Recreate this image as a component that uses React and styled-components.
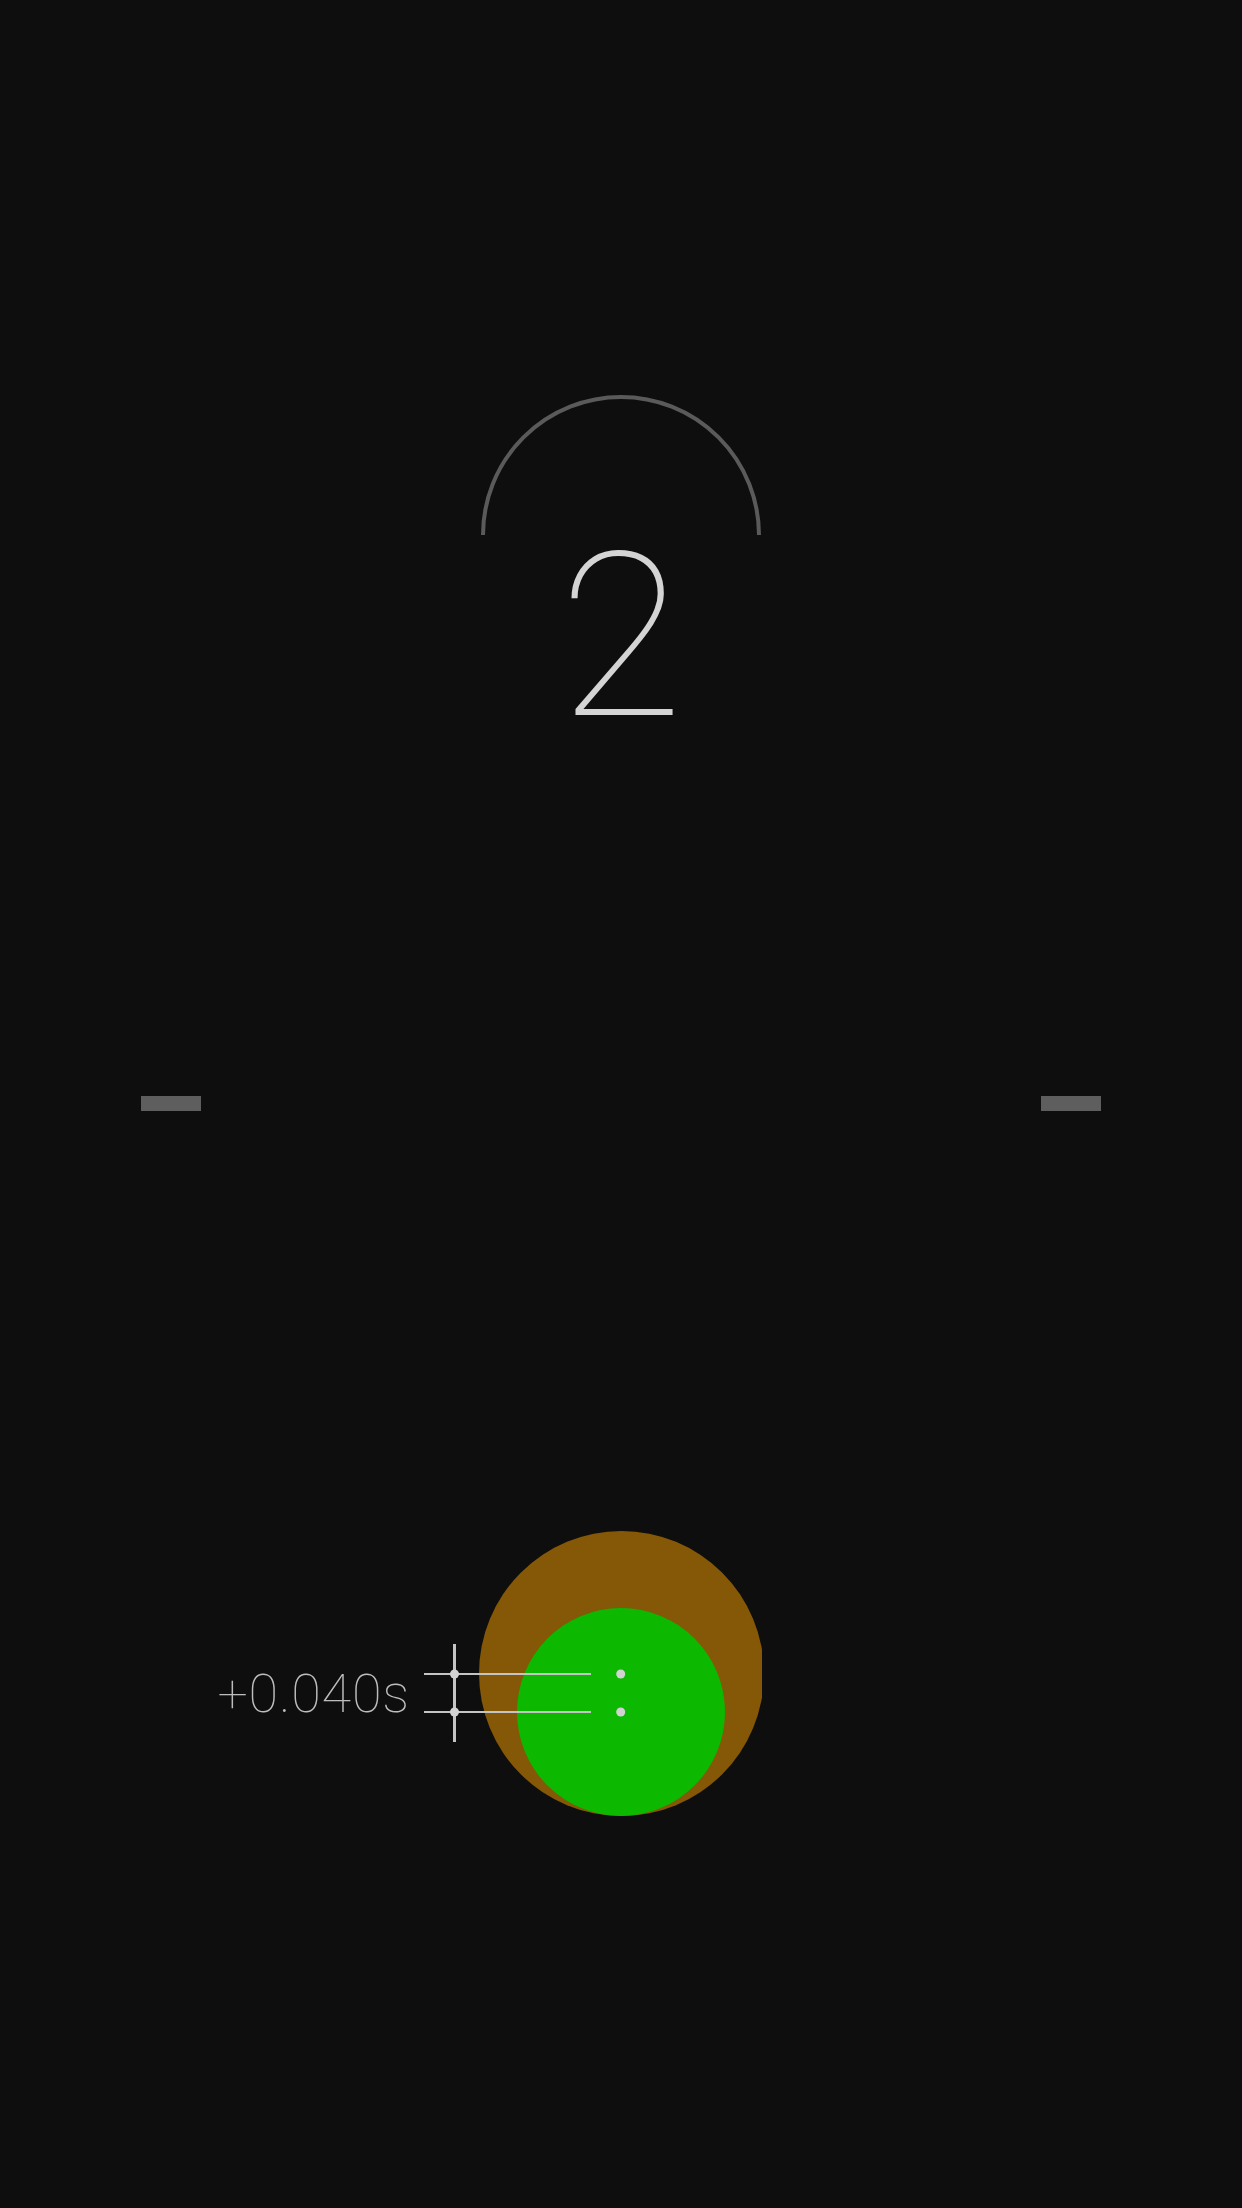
import React from 'react'
import styled, { createGlobalStyle } from 'styled-components'

const GlobalStyle = createGlobalStyle`
  html, body {
    margin: 0;
    padding: 0;
    background: #0e0e0e;
  }
`

const Page = styled.div`
  width: 1242px;
  height: 2208px;
  background: #0e0e0e;
  display: flex;
  flex-direction: column;
  align-items: center;
  padding-top: 393px;
  box-sizing: border-box;
  overflow: hidden;
  font-family: Roboto, "Liberation Sans", sans-serif;
`

const Arc = styled.svg`
  display: block;
  width: 284px;
  height: 142px;
`

const Digit = styled.div`
  font-size: 228px;
  line-height: 228px;
  font-weight: 100;
  color: #d4d4d4;
  margin-top: -12px;
`

const DashRow = styled.div`
  align-self: stretch;
  display: flex;
  justify-content: space-between;
  padding: 0 141px;
  margin-top: 345px;
`

const Dash = styled.div`
  width: 60px;
  height: 15px;
  background: #5e5e5e;
`

const Stage = styled.div`
  position: relative;
  align-self: stretch;
  height: 290px;
  margin-top: 420px;
  display: flex;
  justify-content: center;
`

const Target = styled.div`
  display: grid;
  place-items: end center;
  width: 285px;
  height: 285px;
`

const Disc = styled.div`
  grid-area: 1 / 1;
  position: relative;
  width: ${p => p.$size}px;
  height: ${p => p.$size}px;
  border-radius: 50%;
  background: ${p => p.$color};
  clip-path: ${p => (p.$clip ? 'inset(0 1.5px 0 0)' : 'none')};
`

const Readout = styled.div`
  position: absolute;
  top: 113px;
  right: 612px;
  display: flex;
  align-items: flex-start;
  gap: 10px;
`

const Offset = styled.div`
  font-size: 54px;
  line-height: 54px;
  font-weight: 100;
  letter-spacing: 0.8px;
  color: #bdbdbd;
  margin-top: 23px;
`

const Ruler = styled.svg`
  display: block;
  width: 210px;
  height: 100px;
`

const App = () => (
  <>
    <GlobalStyle />
    <Page>
      <Arc viewBox="0 0 284 142">
        <path d="M 4 142 A 138 138 0 0 1 280 142" fill="none" stroke="#5a5a5a" strokeWidth="4" />
      </Arc>
      <Digit>2</Digit>
      <DashRow>
        <Dash />
        <Dash />
      </DashRow>
      <Stage>
        <Target>
          <Disc $size={285} $color="#845806" $clip />
          <Disc $size={208} $color="#0cb800" />
        </Target>
        <Readout>
          <Offset>+0.040s</Offset>
          <Ruler viewBox="0 0 210 100">
            <g stroke="#c4c4c4" strokeWidth="2">
              <line x1="4" y1="30" x2="171" y2="30" />
              <line x1="4" y1="68" x2="171" y2="68" />
              <line x1="34.5" y1="0" x2="34.5" y2="98" strokeWidth="3" />
            </g>
            <g fill="#d2d2d2">
              <circle cx="34.5" cy="30" r="4.5" />
              <circle cx="34.5" cy="68" r="4.5" />
              <circle cx="200.7" cy="30" r="4.5" />
              <circle cx="200.7" cy="68" r="4.5" />
            </g>
          </Ruler>
        </Readout>
      </Stage>
    </Page>
  </>
)

export default App
